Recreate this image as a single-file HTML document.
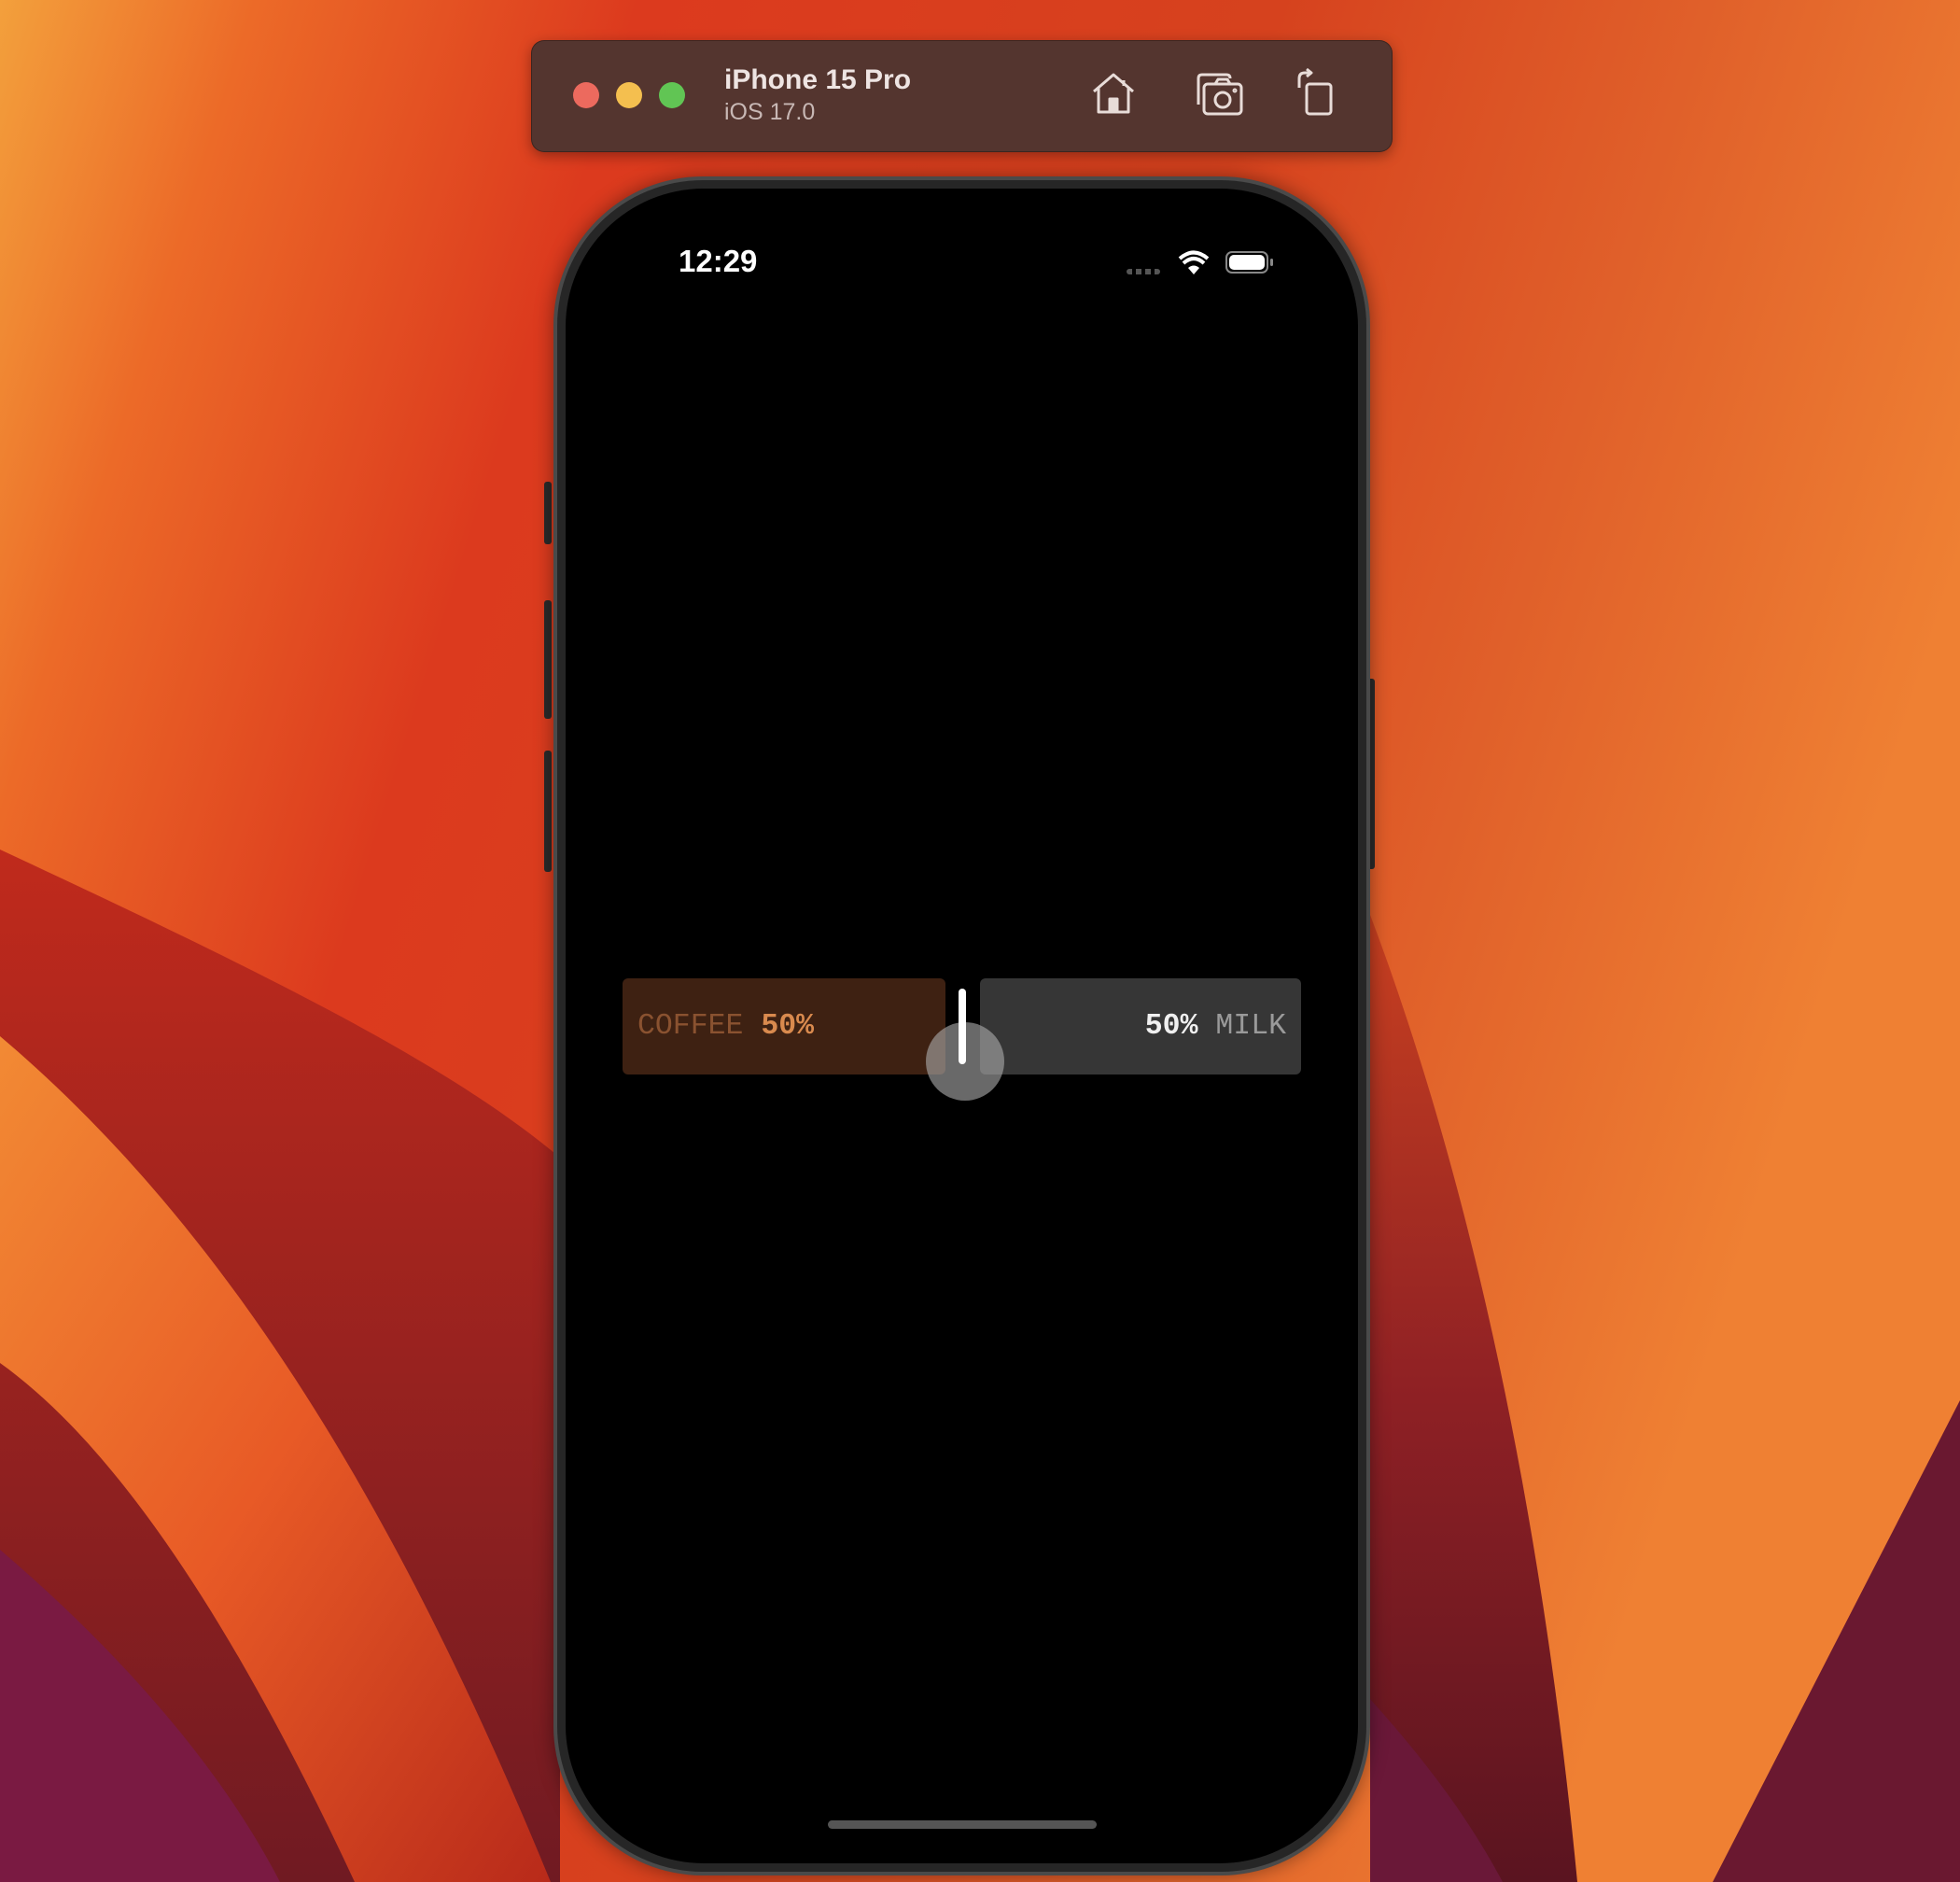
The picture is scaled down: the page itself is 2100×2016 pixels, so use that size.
<!DOCTYPE html>
<html><head><meta charset="utf-8"><style>
html,body{margin:0;padding:0;width:2100px;height:2016px;overflow:hidden;background:#d84420;font-family:"Liberation Sans",sans-serif}
.abs{position:absolute}
</style></head><body>
<svg class="abs" style="left:0;top:0" width="2100" height="2016" viewBox="0 0 2100 2016">
<defs>
<linearGradient id="g0" x1="0" y1="0" x2="1" y2="0.3">
<stop offset="0" stop-color="#f3a03c"/><stop offset="0.12" stop-color="#ec6a28"/><stop offset="0.3" stop-color="#dc3a1e"/><stop offset="0.6" stop-color="#d6421e"/><stop offset="0.8" stop-color="#e0602a"/><stop offset="1" stop-color="#ef8033"/>
</linearGradient>
<linearGradient id="gd" x1="0" y1="0" x2="0" y2="1"><stop offset="0" stop-color="#c02a1c"/><stop offset="1" stop-color="#701a22"/></linearGradient>
<linearGradient id="go" x1="0" y1="0" x2="1" y2="1"><stop offset="0" stop-color="#f28a34"/><stop offset="0.5" stop-color="#e85a26"/><stop offset="1" stop-color="#b82a1a"/></linearGradient>
<linearGradient id="gr" x1="0" y1="0" x2="0" y2="1"><stop offset="0" stop-color="#c84020"/><stop offset="0.5" stop-color="#8e2024"/><stop offset="1" stop-color="#5a1420"/></linearGradient>
</defs>
<rect width="2100" height="2016" fill="url(#g0)"/>
<path d="M0,910 C300,1050 480,1140 600,1240 L600,2016 L0,2016 Z" fill="url(#gd)"/>
<path d="M0,1110 C260,1330 440,1650 590,2016 L380,2016 C270,1780 140,1560 0,1460 Z" fill="url(#go)"/>
<path d="M0,1660 C140,1780 240,1900 300,2016 L0,2016 Z" fill="#7a1a42"/>
<path d="M1468,980 C1570,1250 1650,1600 1690,2016 L1468,2016 Z" fill="url(#gr)"/>
<path d="M2100,1500 L1835,2016 L2100,2016 Z" fill="#6a1830"/>
<path d="M1468,1820 C1540,1900 1580,1960 1610,2016 L1468,2016 Z" fill="#6a1838"/>
</svg>

<!-- toolbar -->
<div class="abs" style="left:569px;top:43px;width:921px;height:118px;background:#54352f;border-radius:14px;box-shadow:0 4px 14px rgba(0,0,0,.35);border:1px solid rgba(0,0,0,.3)"></div>
<div class="abs" style="left:614px;top:88px;width:28px;height:28px;border-radius:50%;background:#ec6a5e"></div>
<div class="abs" style="left:660px;top:88px;width:28px;height:28px;border-radius:50%;background:#f4bf4f"></div>
<div class="abs" style="left:706px;top:88px;width:28px;height:28px;border-radius:50%;background:#61c554"></div>
<div class="abs" style="left:776px;top:68px;color:#eee4e2;font-weight:bold;font-size:30px;line-height:36px">iPhone 15 Pro</div>
<div class="abs" style="left:776px;top:105px;color:#c8b8b5;font-size:25px;line-height:30px">iOS 17.0</div>
<svg class="abs" style="left:1168px;top:76px" width="50" height="50" viewBox="0 0 50 50" fill="none" stroke="#e8dcd8" stroke-width="3" stroke-linejoin="round"><path d="M4,22 L25,4 L46,22"/><path d="M9,18 V44 H41 V18"/><rect x="21" y="30" width="8" height="14" fill="#e8dcd8"/><path d="M36,10 V16"/></svg>
<svg class="abs" style="left:1280px;top:76px" width="54" height="50" viewBox="0 0 54 50" fill="none" stroke="#e8dcd8" stroke-width="3" stroke-linejoin="round"><path d="M4,36 V8 Q4,4 8,4 H34 Q38,4 38,8"/><rect x="10" y="14" width="40" height="32" rx="4"/><circle cx="30" cy="31" r="8"/><path d="M22,14 L25,9 H35 L38,14"/><circle cx="43" cy="21" r="1"/></svg>
<svg class="abs" style="left:1388px;top:72px" width="42" height="54" viewBox="0 0 42 54" fill="none" stroke="#e8dcd8" stroke-width="3" stroke-linejoin="round"><rect x="12" y="18" width="26" height="32" rx="3"/><path d="M4,22 V12 Q4,6 10,6 H16"/><path d="M12,2 L17,6 L12,10"/></svg>

<!-- phone -->
<div class="abs" style="left:583px;top:516px;width:8px;height:67px;background:#2a2a2a;border-radius:3px"></div>
<div class="abs" style="left:583px;top:643px;width:8px;height:127px;background:#2a2a2a;border-radius:3px"></div>
<div class="abs" style="left:583px;top:804px;width:8px;height:130px;background:#2a2a2a;border-radius:3px"></div>
<div class="abs" style="left:1464px;top:727px;width:9px;height:204px;background:#2a2a2a;border-radius:3px"></div>
<div class="abs" style="left:593px;top:189px;width:875px;height:1820px;background:#4a4a4a;border-radius:160px;box-shadow:0 0 20px rgba(0,0,0,.4)"></div>
<div class="abs" style="left:597px;top:193px;width:867px;height:1812px;background:#262626;border-radius:156px"></div>
<div class="abs" style="left:606px;top:202px;width:849px;height:1794px;background:#000;border-radius:148px"></div>

<div class="abs" style="left:727px;top:260px;color:#fff;font-weight:bold;font-size:33px;line-height:40px">12:29</div>
<div class="abs" style="left:1207px;top:288px;width:36px;height:6px;background:repeating-linear-gradient(90deg,#555 0 6px,transparent 6px 10px);border-radius:3px"></div>
<svg class="abs" style="left:1262px;top:268px" width="34" height="26" viewBox="0 0 34 26"><path d="M17,26 L11,19 Q17,14 23,19 Z" fill="#fff"/><path d="M6,14 Q17,4 28,14" stroke="#fff" stroke-width="4" fill="none"/><path d="M2,9 Q17,-4 32,9" stroke="#fff" stroke-width="4" fill="none"/></svg>
<div class="abs" style="left:1313px;top:269px;width:46px;height:24px;border-radius:7px;border:2px solid #888;box-sizing:border-box;padding:2px"><div style="width:100%;height:100%;background:#fff;border-radius:5px"></div></div>
<div class="abs" style="left:1361px;top:277px;width:3px;height:8px;background:#888;border-radius:2px"></div>

<!-- slider -->
<div class="abs" style="left:667px;top:1048px;width:346px;height:103px;background:#3e2112;border-radius:6px"></div>
<div class="abs" style="left:1050px;top:1048px;width:344px;height:103px;background:#363636;border-radius:6px"></div>
<div class="abs" style="left:683px;top:1080px;font-family:'Liberation Mono',monospace;font-size:31.5px;line-height:40px;color:#8a5230;white-space:pre">COFFEE <span style="color:#d98a4e;font-weight:bold">50%</span></div>
<div class="abs" style="left:1050px;width:328px;text-align:right;top:1080px;font-family:'Liberation Mono',monospace;font-size:31.5px;line-height:40px;color:#9a9a9a;white-space:pre"><span style="color:#f0f0f0;font-weight:bold">50%</span> MILK</div>
<div class="abs" style="left:992px;top:1095px;width:84px;height:84px;border-radius:50%;background:rgba(170,170,170,.62)"></div>
<div class="abs" style="left:1027px;top:1059px;width:8px;height:81px;background:#fff;border-radius:4px"></div>

<div class="abs" style="left:887px;top:1950px;width:288px;height:9px;background:#555;border-radius:5px"></div>
</body></html>
